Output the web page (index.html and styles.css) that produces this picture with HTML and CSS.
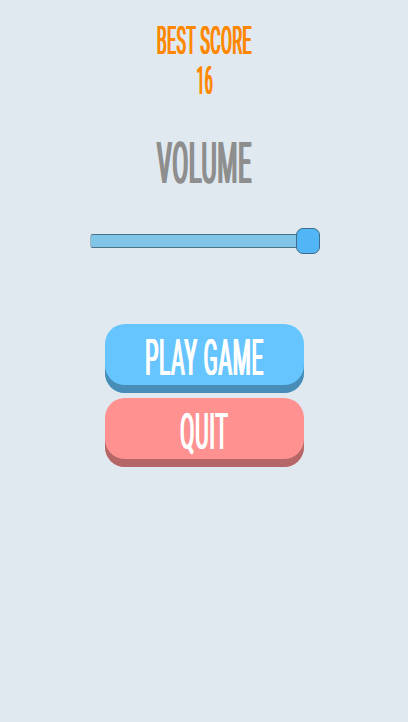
FILE: index.html
```html
<!DOCTYPE html>
<html lang="en">
<head>
<meta charset="utf-8">
<title>Game menu</title>
<link rel="stylesheet" href="styles.css">
</head>
<body>
<main class="menu">
  <section class="score">
    <div class="line"><span class="type">BEST SCORE</span></div>
    <div class="line"><span class="type digits">16</span></div>
  </section>
  <h1 class="volume"><span class="type">VOLUME</span></h1>
  <div class="slider"><div class="track"></div><div class="thumb"></div></div>
  <nav class="actions">
    <button class="button play"><span class="type">PLAY GAME</span></button>
    <button class="button quit"><span class="type">QUIT</span></button>
  </nav>
</main>
</body>
</html>
```
FILE: styles.css
```css
* { box-sizing: border-box; }
body {
  margin: 0;
  height: 722px;
  overflow: hidden;
  background: #e1e9f0;
  font-family: Roboto, "Liberation Sans", sans-serif;
}
.menu {
  display: flex;
  flex-direction: column;
  align-items: center;
  width: 409px;
  padding-top: 21px;
}
.type {
  display: inline-block;
  flex: none;
  letter-spacing: 0.04em;
  white-space: nowrap;
  transform: scaleX(0.408);
}
.score { color: #ff8800; font-size: 38px; }
.score .type { text-shadow: -1.6px 0 currentColor, 1.6px 0 currentColor; }
.score .digits { transform: scaleX(0.36); }
.line {
  display: flex;
  justify-content: center;
  height: 40px;
  line-height: 41px;
}
.volume {
  display: flex;
  justify-content: center;
  margin: 33px 0 0;
  height: 60px;
  color: #8e8e8e;
  font-size: 57.5px;
  font-weight: 400;
  line-height: 60px;
}
.volume .type {
  transform: scaleX(0.398);
  text-shadow: -2.4px 0 currentColor, 2.4px 0 currentColor;
}
.slider {
  display: flex;
  align-items: center;
  width: 230px;
  height: 26px;
  margin: 34px 0 0 1px;
}
.track {
  width: 207px;
  height: 14px;
  margin-right: -1px;
  border: 1px solid #4c7489;
  border-left-color: #a5b4bc;
  border-right: 0;
  border-radius: 3px 0 0 3px;
  background: #80c5e8;
}
.thumb {
  width: 24px;
  height: 26px;
  border: 1.5px solid #3d6d8c;
  border-radius: 7px;
  background: #52b5f5;
}
.actions {
  display: flex;
  flex-direction: column;
  gap: 5px;
  margin-top: 70px;
}
.button {
  display: flex;
  justify-content: center;
  width: 199px;
  height: 69px;
  padding: 0;
  border: 0;
  border-radius: 20px;
  color: #fff;
  font-family: inherit;
  font-size: 50.5px;
  line-height: 67px;
}
.button .type {
  text-shadow: -1.6px 0 currentColor, 1.6px 0 currentColor;
}
.play { background: #66c5ff; box-shadow: inset 0 -8px #488db7; }
.quit { background: #ff9191; box-shadow: inset 0 -8px #b56767; }
```
